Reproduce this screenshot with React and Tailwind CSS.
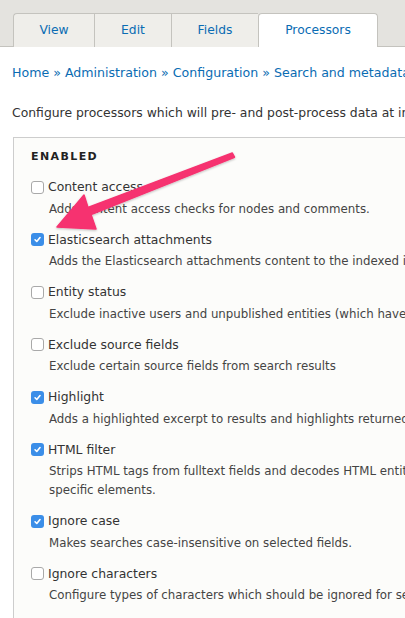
import React from 'react';

const TABS = [
  { label: 'View', w: 'w-[81px]' },
  { label: 'Edit', w: 'w-[77px]' },
  { label: 'Fields', w: 'w-[87px]' },
];

const PROCESSORS = [
  { label: 'Content access', desc: ['Adds content access checks for nodes and comments.'], on: false },
  { label: 'Elasticsearch attachments', desc: ['Adds the Elasticsearch attachments content to the indexed items.'], on: true },
  { label: 'Entity status', desc: ['Exclude inactive users and unpublished entities (which have a "Published" or "Active" status).'], on: false },
  { label: 'Exclude source fields', desc: ['Exclude certain source fields from search results'], on: false },
  { label: 'Highlight', desc: ['Adds a highlighted excerpt to results and highlights returned fields.'], on: true },
  { label: 'HTML filter', desc: ['Strips HTML tags from fulltext fields and decodes HTML entities, boosting', 'specific elements.'], on: true },
  { label: 'Ignore case', desc: ['Makes searches case-insensitive on selected fields.'], on: true },
  { label: 'Ignore characters', desc: ['Configure types of characters which should be ignored for searches.'], on: false },
];

function Checkbox({ on }) {
  if (on) {
    return (
      <span className="w-[13px] h-[13px] rounded-[3px] bg-[#3b8ee8] flex items-center justify-center shrink-0">
        <svg width="9" height="9" viewBox="0 0 10 10" fill="none" stroke="white" strokeWidth="1.8"
             strokeLinecap="round" strokeLinejoin="round">
          <path d="M2.3 5.3 4.2 7.2 7.8 2.8" />
        </svg>
      </span>
    );
  }
  return (
    <span className="w-[13px] h-[13px] rounded-[3px] border border-[#a9a9a9] bg-white shrink-0" />
  );
}

// Flèche d'annotation rose
function Arrow() {
  return (
    <svg className="absolute left-0 top-0 pointer-events-none" width="405" height="618" viewBox="0 0 405 618">
      <defs>
        <filter id="sh" x="-10%" y="-10%" width="120%" height="130%">
          <feDropShadow dx="0" dy="1" stdDeviation="1" floodColor="#000" floodOpacity="0.25" />
        </filter>
      </defs>
      <path
        d="M57 227 L84 195 L88 207.5 L232.3 153 L234.5 157.2 L91 214.5 L96 229 Z"
        fill="#f6316f"
        stroke="#f6316f"
        strokeWidth="1.5"
        strokeLinejoin="round"
        filter="url(#sh)"
      />
    </svg>
  );
}

export default function App() {
  return (
    <div className="relative w-[405px] h-[618px] overflow-hidden bg-white text-[#333]"
         style={{ fontFamily: '"DejaVu Sans", "Liberation Sans", sans-serif' }}>

      {/* ── Onglets ── */}
      <div className="h-[47px] bg-[#e4e3df] border-b border-[#c4c3be] pt-[13px] pl-[13px] flex items-stretch">
        {TABS.map(({ label, w }, i) => (
          <div
            key={label}
            className={`${w} h-[34px] bg-[#efeeea] border-t border-l border-[#c4c3be] ${i === 0 ? 'rounded-tl-[4px]' : ''}
                        flex items-center justify-center text-[12.3px] text-[#0a6cb3]`}
          >
            {label}
          </div>
        ))}
        <div className="w-[120px] h-[34px] bg-white border border-b-0 border-[#c4c3be] rounded-t-[4px]
                        flex items-center justify-center text-[12.3px] text-[#0a6cb3]">
          Processors
        </div>
      </div>

      {/* ── Fil d'Ariane ── */}
      <div className="mt-[17px] pl-[12px] whitespace-nowrap text-[12.6px] leading-[18px] text-[#0a6cb3]">
        Home » Administration » Configuration » Search and metadata » Elasticsearch
      </div>

      <p className="mt-[22px] pl-[12px] whitespace-nowrap text-[12.4px] leading-[18px] text-[#333]">
        Configure processors which will pre- and post-process data at index and search time.
      </p>

      {/* ── Fieldset ── */}
      <div className="mt-[15px] ml-[13px] w-[440px] border border-[#cdcdcd] bg-[#fcfcfa] pl-[17px] pt-[11px] pb-6">
        <div className="text-[11px] leading-[16px] font-bold tracking-[1.4px] text-[#222]">ENABLED</div>

        <div className="mt-[15px] flex flex-col">
          {PROCESSORS.map(({ label, desc, on }) => (
            <div key={label} className="mb-[14px]">
              <div className="flex items-center gap-[4px] h-[14px] text-[12.4px] leading-[14px] text-[#333] whitespace-nowrap">
                <Checkbox on={on} />
                <span>{label}</span>
              </div>
              <div className="mt-[5.5px] pl-[18px] text-[11.8px] leading-[19px] text-[#444] whitespace-nowrap">
                {desc.map(line => <div key={line}>{line}</div>)}
              </div>
            </div>
          ))}
        </div>
      </div>

      <Arrow />
    </div>
  );
}
